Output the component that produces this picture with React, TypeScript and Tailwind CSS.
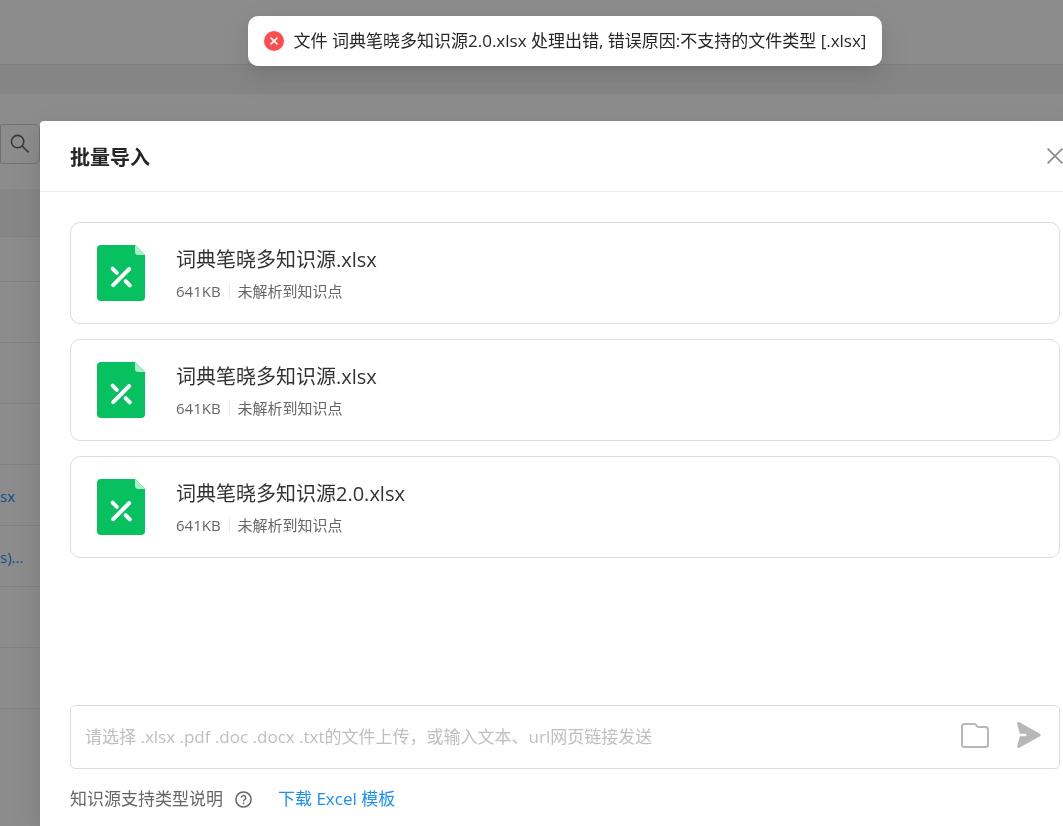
import React from 'react';

interface ImportedFile {
  id: number;
  name: string;
  size: string;
  status: string;
}

const files: ImportedFile[] = [
  { id: 1, name: '词典笔晓多知识源.xlsx', size: '641KB', status: '未解析到知识点' },
  { id: 2, name: '词典笔晓多知识源.xlsx', size: '641KB', status: '未解析到知识点' },
  { id: 3, name: '词典笔晓多知识源2.0.xlsx', size: '641KB', status: '未解析到知识点' },
];

// Source links in the table, empty for rows without one
const rows = ['', '', '', '', 'sx', 's)...', '', ''];

const SearchIcon = () => (
  <svg width="20" height="20" viewBox="0 0 20 20" fill="none" stroke="currentColor" strokeWidth="1.6">
    <circle cx="7.6" cy="7.6" r="6.2" />
    <path d="M12 12l6.6 6.4" />
  </svg>
);

const ExcelIcon = () => (
  <svg width="48" height="56" viewBox="0 0 48 56" className="shrink-0">
    <path d="M4 0h34l10 10v42a4 4 0 0 1-4 4H4a4 4 0 0 1-4-4V4a4 4 0 0 1 4-4z" fill="#07c160" />
    <path d="M38 0l10 10h-7a3 3 0 0 1-3-3z" fill="#a8f0c6" />
    <g stroke="#fff" strokeWidth="4" strokeLinecap="round">
      <path d="M32.2 24L16.2 40.2" />
      <path d="M15.6 23.6l4.2 4.2" />
      <path d="M28.6 36.2l4.2 4.2" />
    </g>
  </svg>
);

const ErrorIcon = () => (
  <svg width="20" height="20" viewBox="0 0 20 20" className="shrink-0">
    <circle cx="10" cy="10" r="10" fill="#ff4d4f" />
    <path d="M6.6 6.6l6.8 6.8M13.4 6.6l-6.8 6.8" stroke="#fff" strokeWidth="1.6" />
  </svg>
);

const CloseIcon = () => (
  <svg width="16" height="16" viewBox="0 0 16 16" stroke="currentColor" strokeWidth="1.5">
    <path d="M0.6 0.6l14.8 14.8M15.4 0.6L0.6 15.4" />
  </svg>
);

const FolderIcon = () => (
  <svg width="28" height="25" viewBox="0 0 28 25" fill="none" stroke="currentColor" strokeWidth="2" strokeLinejoin="round">
    <path d="M3.5 1h9.8a2 2 0 0 1 1.5.7l1.4 1.7a2 2 0 0 0 1.5.7h6.8A2.5 2.5 0 0 1 27 6.6v14.9a2.5 2.5 0 0 1-2.5 2.5h-21A2.5 2.5 0 0 1 1 21.5v-18A2.5 2.5 0 0 1 3.5 1z" />
  </svg>
);

const SendIcon = () => (
  <svg width="24" height="26" viewBox="0 0 24 26" fill="currentColor">
    <path d="M2.4.3l20.6 11.5a1.4 1.4 0 0 1 0 2.4L2.4 25.7C1.1 26.4-.2 25.4.2 24L2.9 14.3H8.2a1.2 1.2 0 0 0 0-2.5H2.9L.2 2C-.2.6 1.1-.4 2.4.3z" />
  </svg>
);

const HelpIcon = () => (
  <svg width="17" height="17" viewBox="0 0 17 17" fill="none" stroke="currentColor" strokeWidth="1.5">
    <circle cx="8.5" cy="8.5" r="7.6" />
    <path d="M6.3 6.8a2.2 2.2 0 1 1 3.3 1.9c-.7.4-1.1.8-1.1 1.6" />
    <path d="M8.5 11.5v1.6" />
  </svg>
);

const Background: React.FC = () => (
  <div className="min-h-screen bg-white">
    <div className="h-[65px] border-b border-[#e8e8f0]" />
    <div className="h-[29px] bg-[#f3f3f3]" />
    <div className="flex pt-[30px] pb-[25px]">
      <button
        aria-label="搜索"
        className="flex h-10 w-10 items-center justify-center rounded-r-md border border-[#d0d0d0] text-[#666]"
      >
        <SearchIcon />
      </button>
    </div>
    <table className="w-full border-separate border-spacing-0 text-left text-[15px]">
      <thead>
        <tr>
          <th className="h-12 border-b border-[#e8e8e8] bg-[#f5f5f5] p-0" />
        </tr>
      </thead>
      <tbody>
        {rows.map((link, i) => (
          <tr key={i}>
            <td className={`border-b border-[#ebebeb] px-0 pt-[2px] pb-0 ${i === 0 ? 'h-[45px]' : 'h-[61px]'}`}>
              {link && (
                <a href="#" className="text-[#1890ff]">
                  {link}
                </a>
              )}
            </td>
          </tr>
        ))}
      </tbody>
    </table>
  </div>
);

const FileCard: React.FC<{ file: ImportedFile }> = ({ file }) => (
  <li className="flex items-center rounded-[10px] border border-[#dedede] py-[22px] pl-[26px] pr-6">
    <ExcelIcon />
    <div className="ml-[31px]">
      <div className="text-xl leading-7 text-[#333]">{file.name}</div>
      <div className="mt-[7px] flex items-center text-[15px] leading-5 text-[#666]">
        <span>{file.size}</span>
        <span className="mx-2 h-4 w-px bg-[#ebebeb]" />
        <span>{file.status}</span>
      </div>
    </div>
  </li>
);

const App: React.FC = () => {
  return (
    <div className="relative h-screen overflow-hidden font-['Open_Sans','Noto_Sans_CJK_SC',sans-serif]">
      <Background />

      {/* Mask + dialog */}
      <div className="fixed inset-0 flex bg-black/45 pt-[121px] pl-10">
        <div
          role="dialog"
          aria-labelledby="import-title"
          className="flex min-w-0 flex-1 flex-col rounded-tl-[4px] bg-white shadow-[0_8px_20px_rgba(0,0,0,0.08),0_4px_8px_-5px_rgba(0,0,0,0.12),0_11px_35px_10px_rgba(0,0,0,0.05)]"
        >
          <div className="flex h-[71px] items-center justify-between border-b border-[#ebebeb] pl-[30px]">
            <h2 id="import-title" className="pt-[3px] text-xl font-bold text-[#262626]">批量导入</h2>
            <button aria-label="关闭" className="text-[#888]">
              <CloseIcon />
            </button>
          </div>

          <div className="flex flex-1 flex-col pt-[30px] pr-[3px] pb-[13px] pl-[30px]">
            <ul className="flex flex-1 flex-col gap-[15px]">
              {files.map((file) => (
                <FileCard key={file.id} file={file} />
              ))}
            </ul>

            <div className="flex h-16 items-center rounded-[5px] border border-[#dedede] pr-[18px] pl-[14px] text-[#b8b8b8]">
              <input
                type="text"
                aria-label="文件或文本"
                placeholder="请选择 .xlsx .pdf .doc .docx .txt的文件上传，或输入文本、url网页链接发送"
                className="min-w-0 flex-1 text-[17px] text-[#333] outline-none placeholder:text-[#bfbfbf]"
              />
              <div className="flex items-center gap-7 pb-1">
                <button aria-label="选择文件">
                  <FolderIcon />
                </button>
                <button aria-label="发送">
                  <SendIcon />
                </button>
              </div>
            </div>

            <div className="mt-4 flex items-center text-[17px] leading-7 text-[#666]">
              <span>知识源支持类型说明</span>
              <button aria-label="说明" className="ml-3">
                <HelpIcon />
              </button>
              <a href="#" className="ml-[26px] text-[#1890ff]">下载 Excel 模板</a>
            </div>
          </div>
        </div>
      </div>

      {/* Error message */}
      <div className="fixed inset-x-0 top-4 flex justify-center pl-[67px]">
        <div
          role="alert"
          className="flex h-[50px] items-center gap-[10px] rounded-[10px] bg-white px-4 text-[17px] whitespace-nowrap text-[#262626] shadow-[0_8px_20px_rgba(0,0,0,0.08),0_4px_8px_-5px_rgba(0,0,0,0.12),0_11px_35px_10px_rgba(0,0,0,0.05)]"
        >
          <ErrorIcon />
          <span>文件 词典笔晓多知识源2.0.xlsx 处理出错, 错误原因:不支持的文件类型 [.xlsx]</span>
        </div>
      </div>
    </div>
  );
};

export default App;
